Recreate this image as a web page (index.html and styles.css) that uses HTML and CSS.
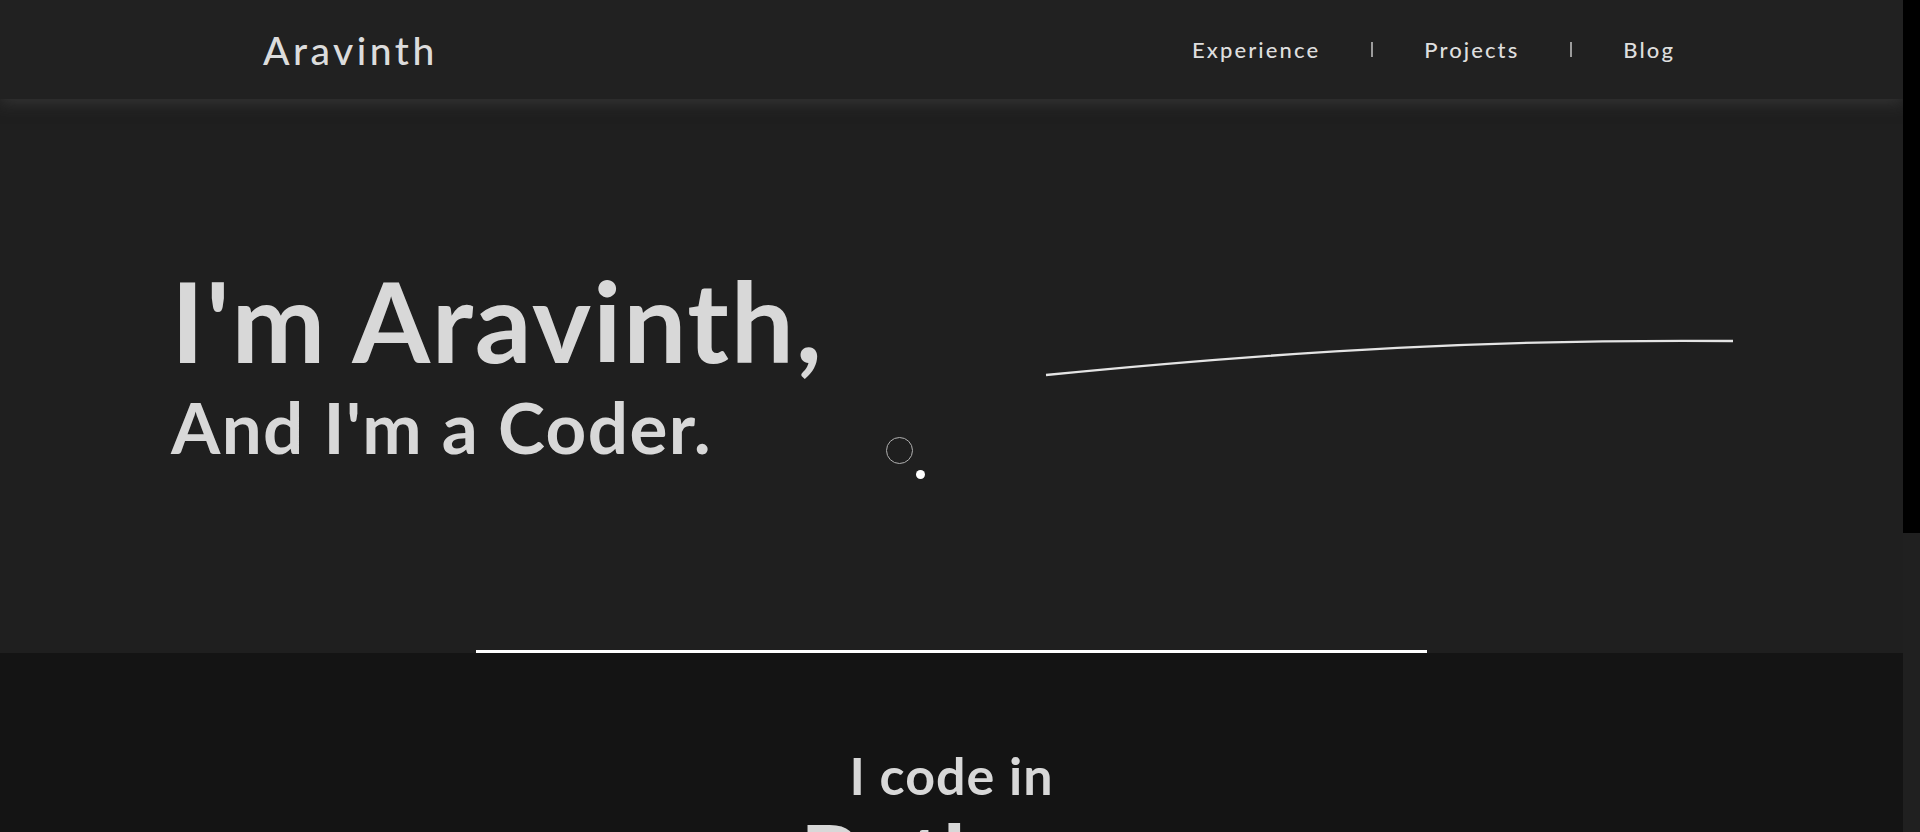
FILE: index.html
```html
<!DOCTYPE html>
<html lang="en">
<head>
<meta charset="utf-8">
<title>Aravinth</title>
<link rel="stylesheet" href="styles.css">
</head>
<body>
<header class="topbar">
  <a class="logo" href="#">Aravinth</a>
  <nav class="nav">
    <a class="nav-link" href="#">Experience</a>
    <span class="nav-sep"></span>
    <a class="nav-link" href="#">Projects</a>
    <span class="nav-sep"></span>
    <a class="nav-link" href="#">Blog</a>
  </nav>
</header>

<main>
  <section class="hero">
    <div class="hero-text">
      <h1 class="hero-title">I'm Aravinth,</h1>
      <h2 class="hero-sub">And I'm a Coder.</h2>
    </div>
    <svg class="hero-curve" width="720" height="60" viewBox="1030 325 720 60" aria-hidden="true">
      <path d="M1046 375 C1300 350 1500 339 1733 341" fill="none" stroke="#e4e4e4" stroke-width="2.3"/>
    </svg>
    <span class="cursor-ring"></span>
    <span class="cursor-dot"></span>
    <hr class="hero-rule">
  </section>

  <section class="langs">
    <h3 class="langs-lead">I code in</h3>
    <p class="langs-name">Python</p>
  </section>
</main>

<div class="scrollbar" aria-hidden="true"><div class="scrollbar-thumb"></div></div>
</body>
</html>
```

FILE: styles.css
```css
html {
  background: #202020;
}

body {
  margin: 0 17px 0 0;
  background: #1f1f1f;
  color: #d8d8d8;
  font-family: "Lato", "Open Sans", sans-serif;
}

.scrollbar {
  position: fixed;
  top: 0;
  right: 0;
  width: 17px;
  height: 100vh;
  background: #202020;
  z-index: 10;
}

.scrollbar-thumb {
  height: 533px;
  background: #000000;
}

.topbar {
  position: relative;
  z-index: 2;
  height: 99px;
  box-sizing: border-box;
  display: flex;
  align-items: center;
  justify-content: space-between;
  padding: 0 228px 0 263px;
  background: #212121;
  box-shadow: 0 4px 14px rgba(70, 70, 70, 0.55);
}

.logo {
  color: #dcdcdc;
  text-decoration: none;
  font-size: 39px;
  font-weight: 500;
  letter-spacing: 3.5px;
}

.nav {
  display: flex;
  align-items: center;
  gap: 51px;
}

.nav-link {
  color: #dedede;
  text-decoration: none;
  font-size: 22px;
  font-weight: 500;
  letter-spacing: 2.1px;
}

.nav-sep {
  width: 2px;
  height: 15px;
  background: #9c9c9c;
}

.hero {
  position: relative;
  height: 554px;
  display: flex;
  flex-direction: column;
  background: #1f1f1f;
}

.hero-text {
  padding: 165px 0 0 171px;
}

.hero-title {
  margin: 0;
  font-size: 112px;
  line-height: 1;
  font-weight: 700;
  letter-spacing: 1.8px;
  color: #d8d8d8;
}

.hero-sub {
  margin: 15px 0 0;
  font-size: 71px;
  line-height: 1;
  font-weight: 700;
  letter-spacing: 1.4px;
  color: #d8d8d8;
}

.hero-curve {
  position: absolute;
  left: 1030px;
  top: 226px;
}

.cursor-ring {
  position: absolute;
  left: 886px;
  top: 338px;
  width: 25px;
  height: 25px;
  border: 1.5px solid #b0b0b0;
  border-radius: 50%;
}

.cursor-dot {
  position: absolute;
  left: 916px;
  top: 371px;
  width: 9px;
  height: 9px;
  border-radius: 50%;
  background: #ffffff;
}

.hero-rule {
  margin: auto auto 0;
  width: 50%;
  height: 3px;
  border: 0;
  background: #ffffff;
}

.langs {
  min-height: 646px;
  box-sizing: border-box;
  padding-top: 96px;
  background: #141414;
  text-align: center;
}

.langs-lead {
  margin: 0;
  font-size: 52px;
  line-height: 1;
  font-weight: 700;
  letter-spacing: 1px;
  color: #d8d8d8;
}

.langs-name {
  margin: 9px 0 0;
  font-size: 94px;
  line-height: 1;
  font-weight: 700;
  color: #d8d8d8;
}
```
